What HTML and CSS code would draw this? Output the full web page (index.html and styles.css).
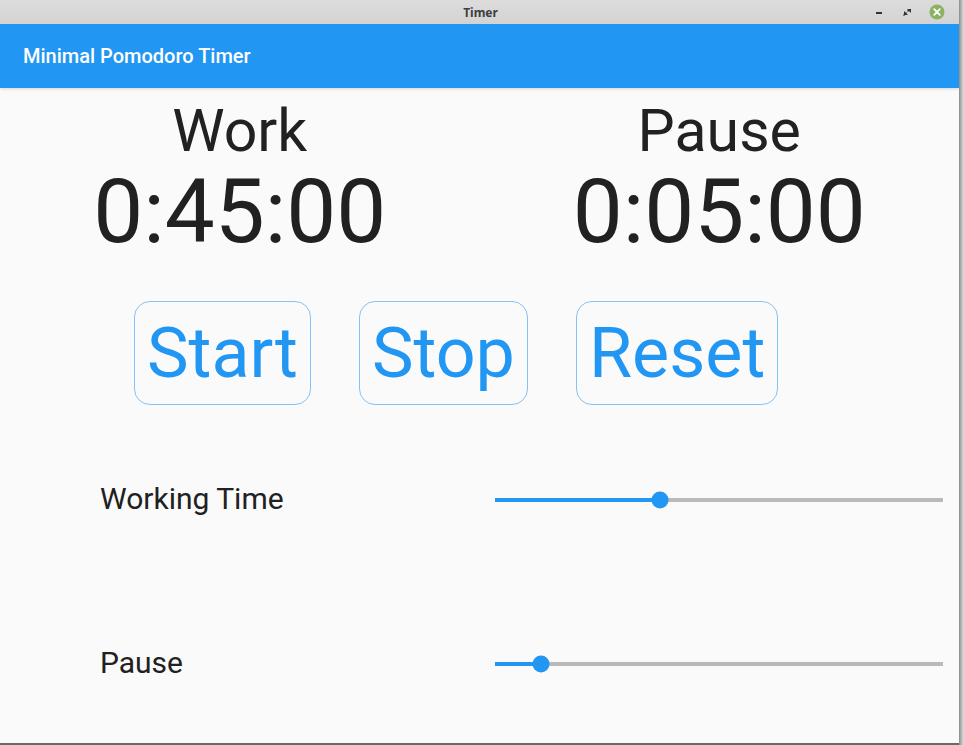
FILE: index.html
```html
<!DOCTYPE html>
<html>
<head>
<meta charset="utf-8">
<title>Timer</title>
<link rel="stylesheet" href="styles.css">
</head>
<body>
<div class="frame">
  <div class="window">
    <header class="titlebar">
      <span class="wm-title">Timer</span>
      <div class="wm-buttons">
        <svg class="wm-btn" width="12" height="12" viewBox="0 0 12 12"><rect x="3" y="6" width="6" height="2" fill="#333"/></svg>
        <svg class="wm-btn" width="12" height="12" viewBox="0 0 12 12"><path d="M6 3h4v4z M2 9l3-3 1 1-3 3z M6 5l1-1 1 1-1 1z" fill="#333"/><path d="M3 5v4h4z" fill="#333"/></svg>
        <svg class="wm-close" width="16" height="16" viewBox="0 0 16 16"><circle cx="8" cy="8" r="7.5" fill="#8bb262"/><path d="M5.2 5.2l5.6 5.6M10.8 5.2l-5.6 5.6" stroke="#fff" stroke-width="1.8" stroke-linecap="round"/></svg>
      </div>
    </header>
    <div class="appbar">Minimal Pomodoro Timer</div>
    <main class="content">
      <section class="timers">
        <div class="timer">
          <div class="timer-label">Work</div>
          <div class="timer-value">0:45:00</div>
        </div>
        <div class="timer">
          <div class="timer-label">Pause</div>
          <div class="timer-value">0:05:00</div>
        </div>
      </section>
      <section class="actions">
        <button class="btn">Start</button>
        <button class="btn">Stop</button>
        <button class="btn">Reset</button>
      </section>
      <section class="settings">
        <div class="setting">
          <div class="setting-label">Working Time</div>
          <div class="slider">
            <div class="track">
              <div class="fill" style="width:36.8%"></div>
              <div class="thumb" style="left:36.8%"></div>
            </div>
          </div>
        </div>
        <div class="setting">
          <div class="setting-label">Pause</div>
          <div class="slider">
            <div class="track">
              <div class="fill" style="width:10.3%"></div>
              <div class="thumb" style="left:10.3%"></div>
            </div>
          </div>
        </div>
      </section>
    </main>
  </div>
  <div class="edge"></div>
</div>
</body>
</html>
```

FILE: styles.css
```css
* { box-sizing: border-box; }
html, body { margin: 0; padding: 0; }
body {
  width: 964px;
  height: 745px;
  overflow: hidden;
  background: #fafafa;
  font-family: Roboto, "Noto Sans", sans-serif;
}
.frame {
  display: flex;
  width: 964px;
  height: 745px;
}
.window {
  width: 959px;
  height: 745px;
  display: flex;
  flex-direction: column;
  background: #fafafa;
  border-bottom: 2px solid #6a6a6a;
}
.edge {
  width: 5px;
  height: 745px;
  background: linear-gradient(to right, #8a8a8a, #b0b0b0 40%, #e0e0e0);
}
.titlebar {
  height: 24px;
  flex: none;
  background: linear-gradient(#dcdcdc, #d3d3d3);
  display: flex;
  align-items: center;
  justify-content: center;
  position: relative;
}
.wm-title {
  font-family: "Noto Sans", "DejaVu Sans", sans-serif;
  font-weight: 700;
  font-size: 12px;
  color: #3d3d3d;
  margin-left: 2px;
}
.wm-buttons {
  position: absolute;
  right: 14px;
  top: 4px;
  display: flex;
  align-items: center;
  gap: 16px;
}
.wm-btn, .wm-close { display: block; }
.appbar {
  height: 64px;
  flex: none;
  background: #2196f3;
  color: #fff;
  font-size: 20px;
  font-weight: 500;
  padding-left: 23px;
  display: flex;
  align-items: center;
  box-shadow: 0 1px 3px rgba(0,0,0,0.15);
}
.content {
  flex: 1;
  display: flex;
  flex-direction: column;
  padding-top: 13px;
  color: #212121;
}
.timers {
  display: grid;
  grid-template-columns: 1fr 1fr;
}
.timer {
  display: flex;
  flex-direction: column;
  align-items: center;
}
.timer-label {
  font-size: 59px;
  line-height: 1;
}
.timer-value {
  font-size: 89px;
  line-height: 1;
  margin-top: 7px;
}
.actions {
  display: flex;
  gap: 48px;
  padding-left: 134px;
  margin-top: 45px;
}
.btn {
  font-family: Roboto, sans-serif;
  font-size: 70px;
  line-height: 1;
  color: #2196f3;
  background: transparent;
  border: 1px solid #86c3f5;
  border-radius: 16px;
  padding: 16px 12px;
  height: 104px;
}
.settings {
  display: flex;
  flex-direction: column;
  margin-top: 75px;
  gap: 124px;
}
.setting {
  display: flex;
  align-items: center;
  height: 40px;
  padding-right: 16px;
}
.setting-label {
  width: 495px;
  padding-left: 100px;
  font-size: 30px;
  margin-top: -3px;
}
.slider {
  flex: 1;
  height: 40px;
  display: flex;
  align-items: center;
}
.track {
  position: relative;
  width: 100%;
  height: 4px;
  background: #b9b9b9;
}
.fill {
  height: 100%;
  background: #2196f3;
}
.thumb {
  position: absolute;
  top: 50%;
  width: 17px;
  height: 17px;
  border-radius: 50%;
  background: #2196f3;
  transform: translate(-50%, -50%);
}
```
